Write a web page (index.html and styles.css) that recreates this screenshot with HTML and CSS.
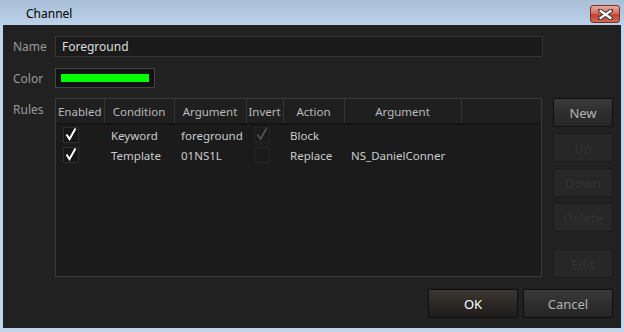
FILE: index.html
```html
<!DOCTYPE html>
<html>
<head>
    <title>Channel</title>
    <meta name="viewport" content="width=device-width, initial-scale=1.0">
    <link rel="stylesheet" href="styles.css">
</head>
<body>
    <div class="window">
        <div class="titlebar">
            <span class="title">Channel</span>
            <div class="close-btn">
                <svg width="15" height="11" viewBox="0 0 15 11">
                    <path d="M2 1.5 L13 9.5 M13 1.5 L2 9.5" stroke="#3b3b3b" stroke-width="4.2" stroke-linecap="square"/>
                    <path d="M2.5 2 L12.5 9 M12.5 2 L2.5 9" stroke="#fff" stroke-width="2.2" stroke-linecap="square"/>
                </svg>
            </div>
        </div>
        <div class="content">
            <div class="row name-row">
                <label class="label">Name</label>
                <div class="text-input">Foreground</div>
            </div>
            <div class="row color-row">
                <label class="label">Color</label>
                <div class="swatch"><div class="swatch-fill"></div></div>
            </div>
            <div class="row rules-row">
                <label class="label">Rules</label>
                <div class="grid">
                    <table>
                        <colgroup>
                            <col style="width:48px">
                            <col style="width:70px">
                            <col style="width:72px">
                            <col style="width:37px">
                            <col style="width:61px">
                            <col style="width:117px">
                            <col>
                        </colgroup>
                        <thead>
                            <tr>
                                <th>Enabled</th>
                                <th>Condition</th>
                                <th>Argument</th>
                                <th>Invert</th>
                                <th>Action</th>
                                <th>Argument</th>
                                <th class="last"></th>
                            </tr>
                        </thead>
                        <tbody>
                            <tr>
                                <td class="check-cell"><span class="check"><svg width="15" height="15" viewBox="0 0 15 15"><path d="M3.5 7.5 L6.5 12 L12.5 1.5" fill="none" stroke="#fff" stroke-width="2"/></svg></span></td>
                                <td>Keyword</td>
                                <td>foreground</td>
                                <td class="check-cell invert"><span class="check dim"><svg width="15" height="15" viewBox="0 0 15 15"><path d="M3.5 7.5 L6.5 12 L12.5 1.5" fill="none" stroke="#555" stroke-width="1.6"/></svg></span></td>
                                <td>Block</td>
                                <td></td>
                                <td></td>
                            </tr>
                            <tr>
                                <td class="check-cell"><span class="check"><svg width="15" height="15" viewBox="0 0 15 15"><path d="M3.5 7.5 L6.5 12 L12.5 1.5" fill="none" stroke="#fff" stroke-width="2"/></svg></span></td>
                                <td>Template</td>
                                <td>01NS1L</td>
                                <td class="check-cell invert"><span class="check dim"></span></td>
                                <td>Replace</td>
                                <td>NS_DanielConner</td>
                                <td></td>
                            </tr>
                        </tbody>
                    </table>
                </div>
                <div class="side-buttons">
                    <button class="btn">New</button>
                    <button class="btn disabled">Up</button>
                    <button class="btn disabled">Down</button>
                    <button class="btn disabled">Delete</button>
                    <button class="btn disabled spaced">Edit</button>
                </div>
            </div>
            <div class="footer">
                <button class="btn wide ok">OK</button>
                <button class="btn wide">Cancel</button>
            </div>
        </div>
    </div>
</body>
</html>
```
FILE: styles.css
```css
body { margin: 0; background-color: #c1d6ec; font-family: "Noto Sans", "Open Sans", sans-serif; font-size: 12px; }
.window { width: 624px; height: 332px; display: flex; flex-direction: column; }
.titlebar { height: 25px; display: flex; align-items: flex-start; background: linear-gradient(#a8bdd6, #bcd2ea); }
.title { color: #000; font-size: 12px; padding-left: 26px; margin-top: 5px; }
.close-btn { margin-left: auto; margin-right: 4px; margin-top: 5px; width: 28px; height: 16px; border: 1px solid #7a2f2a; border-radius: 3px;
             background: linear-gradient(#e8a89c, #d4705f 45%, #c0412f 55%, #d36a55); display: flex; align-items: center; justify-content: center; }
.content { margin: 0 3px 4px 3px; background-color: #212121; flex: 1; padding: 11px 8px 0 10px; }
.row { display: flex; }
.label { width: 42px; color: #999; font-size: 12px; }
.name-row { height: 21px; margin-bottom: 11px; align-items: center; }
.text-input { width: 480px; height: 19px; line-height: 19px; border: 1px solid #353535; background-color: #1a1a1a; color: #ddd; padding-left: 6px; margin-right: 60px; }
.color-row { height: 20px; margin-bottom: 10px; align-items: center; }
.swatch { width: 100px; height: 20px; border: 1px solid #454545; background-color: #121212; padding: 5px; box-sizing: border-box; }
.swatch-fill { width: 100%; height: 100%; background-color: #00ff00; }
.rules-row { align-items: flex-start; }
.rules-row .label { padding-top: 3px; }
.grid { width: 485px; height: 177px; border: 1px solid #3a3a3a; background-color: #1b1b1b; margin-right: 11px; overflow: hidden; }
table { border-collapse: collapse; table-layout: fixed; width: 485px; color: #ccc; font-size: 11.5px; }
th { height: 24px; font-weight: normal; color: #bbb; border-right: 1px solid #353535; border-bottom: 2px solid #141414; background-color: #1f1f1f; padding: 0; white-space: nowrap; }
th.last { border-right: none; }
td { height: 20px; padding: 0 0 0 7px; white-space: nowrap; }
.check-cell { padding-left: 7px; }
.check-cell.invert { padding-left: 8px; }
.check { display: block; width: 14px; height: 14px; border: 1px solid #2f2f2f; background-color: #161616; }
.check svg { display: block; margin: -1px 0 0 -1px; }
.check.dim { border-color: #262626; background-color: #1b1b1b; }
.side-buttons { display: flex; flex-direction: column; gap: 6px; }
.btn { width: 60px; height: 29px; border: 1px solid #0e0e0e; border-radius: 1px; background: linear-gradient(#3a3a3a, #2e2e2e 50%, #262626);
       color: #b4b4b4; font-family: "Noto Sans", "Open Sans", sans-serif; font-size: 13px; padding: 0; cursor: pointer; }
.btn.disabled { background: #272727; border-color: #1c1c1c; color: #333; }
.btn.spaced { margin-top: 11px; }
.footer { display: flex; justify-content: flex-end; gap: 5px; margin-top: 11px; }
.btn.wide { width: 90px; }
.btn.ok { color: #fff; background: linear-gradient(#3d3833, #2b2825 50%, #1f1d1b); }
```
